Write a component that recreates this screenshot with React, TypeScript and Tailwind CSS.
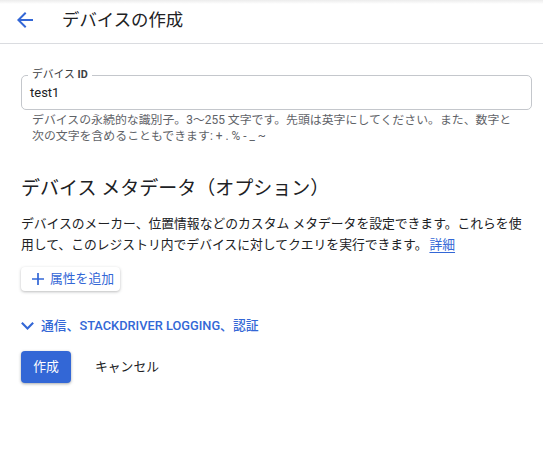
export default function App() {
  return (
    <div className="relative w-[543px] h-[466px] bg-white text-[#202124] font-['Roboto','Noto_Sans_CJK_JP',sans-serif]">
      <div className="absolute top-0 left-0 right-0 h-[4px] bg-gradient-to-b from-[#ececec] to-white" />
      <header className="h-[44px] pb-[4px] border-b border-[#dadce0] flex items-center">
        <svg viewBox="4 4 16 16" className="w-[16px] h-[16px] ml-[17px] fill-[#3367d6]">
          <path d="M20 11H7.83l5.59-5.59L12 4l-8 8 8 8 1.41-1.41L7.83 13H20v-2z" />
        </svg>
        <h1 className="ml-[29px] text-[17.4px] leading-[24px]">デバイスの作成</h1>
      </header>

      <main className="pl-[21px] pr-[11px]">
        <div className="relative mt-[31px] h-[35px] border border-[#c4c7cc] rounded-[5px] flex items-center pl-[8px]">
          <span className="absolute -top-[8px] left-[6px] px-[4px] bg-white text-[10.8px] leading-[14px] text-[#3c4043]">
            デバイス <span className="font-bold">ID</span>
          </span>
          <span className="text-[13px]">test1</span>
        </div>
        <p className="mt-[2px] pl-[11px] text-[11.9px] leading-[16px] text-[#5f6368]">
          デバイスの永続的な識別子。3〜255 文字です。先頭は英字にしてください。また、数字と
          <br />
          次の文字を含めることもできます: + . % - _ ~
        </p>

        <h2 className="mt-[33px] text-[19px] leading-[24px]">デバイス メタデータ（オプション）</h2>
        <p className="mt-[12px] text-[12.8px] leading-[21px] text-[#202124]">
          デバイスのメーカー、位置情報などのカスタム メタデータを設定できます。これらを使
          <br />
          用して、このレジストリ内でデバイスに対してクエリを実行できます。
          <a className="ml-[2px] text-[#3367d6] underline underline-offset-[3px]">詳細</a>
        </p>

        <button className="mt-[12px] h-[24px] w-[99px] flex items-center pl-[11px] rounded-[4px] bg-white shadow-[0_1px_3px_rgba(60,64,67,0.35)] text-[#3367d6] text-[12.8px]">
          <svg viewBox="5 5 14 14" className="w-[12px] h-[12px] fill-[#3367d6]">
            <path d="M19 13h-6v6h-2v-6H5v-2h6V5h2v6h6v2z" />
          </svg>
          <span className="ml-[6px]">属性を追加</span>
        </button>

        <div className="mt-[25px] h-[20px] flex items-center text-[#3367d6] text-[12.8px] font-medium">
          <svg viewBox="6 8.5 12 7.5" className="w-[13px] h-[8px] fill-[#3367d6]">
            <path d="M16.59 8.59L12 13.17 7.41 8.59 6 10l6 6 6-6z" />
          </svg>
          <span className="ml-[7px]">通信、STACKDRIVER LOGGING、認証</span>
        </div>

        <div className="mt-[15px] flex items-center">
          <button className="w-[50px] h-[32px] rounded-[4px] bg-[#3367d6] text-white text-[12.8px] shadow-[0_1px_3px_rgba(60,64,67,0.45)]">
            作成
          </button>
          <button className="ml-[24px] text-[12.8px] text-[#202124]">キャンセル</button>
        </div>
      </main>
    </div>
  );
}
